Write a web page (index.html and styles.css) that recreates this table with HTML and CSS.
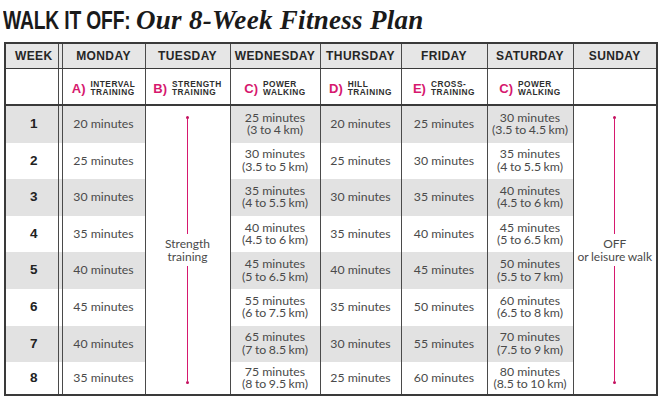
FILE: index.html
```
<!DOCTYPE html>
<html>
<head>
<meta charset="utf-8">
<link rel="stylesheet" href="styles.css">
</head>
<body>
<h1 class="title"><span class="title-sans">WALK IT OFF:</span><span class="title-serif">Our 8-Week Fitness Plan</span></h1>
<table class="plan">
  <colgroup>
    <col class="c-week"><col class="c-mon"><col class="c-tue"><col class="c-wed"><col class="c-thu"><col class="c-fri"><col class="c-sat"><col class="c-sun">
  </colgroup>
  <thead>
    <tr class="days">
      <th class="week">WEEK</th><th>MONDAY</th><th>TUESDAY</th><th>WEDNESDAY</th><th>THURSDAY</th><th>FRIDAY</th><th>SATURDAY</th><th>SUNDAY</th>
    </tr>
    <tr class="types">
      <th class="week"></th>
      <th><span class="type"><span class="letter">A)</span><span class="tname">INTERVAL<br>TRAINING</span></span></th>
      <th><span class="type"><span class="letter">B)</span><span class="tname">STRENGTH<br>TRAINING</span></span></th>
      <th><span class="type"><span class="letter">C)</span><span class="tname">POWER<br>WALKING</span></span></th>
      <th><span class="type"><span class="letter">D)</span><span class="tname">HILL<br>TRAINING</span></span></th>
      <th><span class="type"><span class="letter">E)</span><span class="tname">CROSS-<br>TRAINING</span></span></th>
      <th><span class="type"><span class="letter">C)</span><span class="tname">POWER<br>WALKING</span></span></th>
      <th></th>
    </tr>
  </thead>
  <tbody>
    <tr class="odd">
      <td class="week">1</td><td>20 minutes</td>
      <td class="span" rowspan="8"><div class="bar"><span class="dot"></span><span class="line"></span><span class="bar-text">Strength<br>training</span><span class="line"></span><span class="dot"></span></div></td>
      <td>25 minutes<br><span class="km">(3 to 4 km)</span></td><td>20 minutes</td><td>25 minutes</td><td>30 minutes<br><span class="km">(3.5 to 4.5 km)</span></td>
      <td class="span" rowspan="8"><div class="bar"><span class="dot"></span><span class="line"></span><span class="bar-text">OFF<br>or leisure walk</span><span class="line"></span><span class="dot"></span></div></td>
    </tr>
    <tr class="even">
      <td class="week">2</td><td>25 minutes</td><td>30 minutes<br><span class="km">(3.5 to 5 km)</span></td><td>25 minutes</td><td>30 minutes</td><td>35 minutes<br><span class="km">(4 to 5.5 km)</span></td>
    </tr>
    <tr class="odd">
      <td class="week">3</td><td>30 minutes</td><td>35 minutes<br><span class="km">(4 to 5.5 km)</span></td><td>30 minutes</td><td>35 minutes</td><td>40 minutes<br><span class="km">(4.5 to 6 km)</span></td>
    </tr>
    <tr class="even">
      <td class="week">4</td><td>35 minutes</td><td>40 minutes<br><span class="km">(4.5 to 6 km)</span></td><td>35 minutes</td><td>40 minutes</td><td>45 minutes<br><span class="km">(5 to 6.5 km)</span></td>
    </tr>
    <tr class="odd">
      <td class="week">5</td><td>40 minutes</td><td>45 minutes<br><span class="km">(5 to 6.5 km)</span></td><td>40 minutes</td><td>45 minutes</td><td>50 minutes<br><span class="km">(5.5 to 7 km)</span></td>
    </tr>
    <tr class="even">
      <td class="week">6</td><td>45 minutes</td><td>55 minutes<br><span class="km">(6 to 7.5 km)</span></td><td>35 minutes</td><td>50 minutes</td><td>60 minutes<br><span class="km">(6.5 to 8 km)</span></td>
    </tr>
    <tr class="odd">
      <td class="week">7</td><td>40 minutes</td><td>65 minutes<br><span class="km">(7 to 8.5 km)</span></td><td>30 minutes</td><td>55 minutes</td><td>70 minutes<br><span class="km">(7.5 to 9 km)</span></td>
    </tr>
    <tr class="even last">
      <td class="week">8</td><td>35 minutes</td><td>75 minutes<br><span class="km">(8 to 9.5 km)</span></td><td>25 minutes</td><td>60 minutes</td><td>80 minutes<br><span class="km">(8.5 to 10 km)</span></td>
    </tr>
  </tbody>
</table>
</body>
</html>
```
FILE: styles.css
```
html, body {
  margin: 0;
  padding: 0;
  background: #ffffff;
}

body {
  width: 660px;
  height: 400px;
  overflow: hidden;
  font-family: "Lato", "Open Sans", sans-serif;
  color: #444;
}

.title {
  margin: 0;
  height: 42px;
  padding: 5px 0 0 3px;
  box-sizing: border-box;
  font-size: 25px;
  line-height: 30px;
  color: #1a1a1a;
  white-space: nowrap;
  display: flex;
  align-items: baseline;
}

.title-sans {
  display: inline-block;
  font-family: "Liberation Sans", Arial, sans-serif;
  font-weight: 700;
  font-size: 26px;
  letter-spacing: -0.2px;
  transform: scaleX(0.74);
  transform-origin: left center;
  width: 128px;
}

.title-serif {
  font-family: "Liberation Serif", serif;
  font-weight: 700;
  font-style: italic;
  font-size: 27px;
  letter-spacing: 0.3px;
  margin-left: 5px;
}

.plan {
  margin: 0 0 0 4px;
  width: 652px;
  border-collapse: collapse;
  table-layout: fixed;
  border: 2px solid #3a3a3a;
}

.c-week { width: 57px; }
.c-mon { width: 83px; }
.c-tue { width: 85px; }
.c-wed { width: 90px; }
.c-thu { width: 81px; }
.c-fri { width: 86px; }
.c-sat { width: 86px; }
.c-sun { width: 84px; }

.plan th,
.plan td {
  border-left: 1px solid #4a4a4a;
  border-right: 1px solid #4a4a4a;
  padding: 0;
  text-align: center;
  vertical-align: middle;
}

.days th {
  height: 24px;
  background: #e6e6e6;
  font-family: "Liberation Sans", Arial, sans-serif;
  font-weight: 700;
  font-size: 12px;
  letter-spacing: 0.4px;
  color: #262626;
  border-bottom: 1px solid #3a3a3a;
}

.types th {
  height: 35px;
  background: #ffffff;
  border-bottom: 2px solid #3a3a3a;
}

.type {
  display: inline-flex;
  align-items: center;
  gap: 5px;
  text-align: left;
}

.letter {
  font-family: "Liberation Sans", Arial, sans-serif;
  font-weight: 700;
  font-size: 13px;
  color: #d6186e;
}

.tname {
  font-family: "Liberation Sans", Arial, sans-serif;
  font-weight: 700;
  font-size: 8.3px;
  line-height: 8.5px;
  letter-spacing: 0.5px;
  color: #2e2e2e;
}

.plan tbody td {
  height: 36.6px;
  font-size: 12.3px;
  line-height: 12.5px;
  color: #4a4a4a;
}

.km {
  word-spacing: -0.6px;
}

.plan tbody tr.last td {
  height: 32px;
}

.plan tbody tr.odd td {
  background: #e2e2e2;
}

.plan tbody td.week {
  font-family: "Liberation Sans", Arial, sans-serif;
  font-weight: 700;
  font-size: 13.5px;
  color: #222;
}

.plan .week {
  box-shadow: inset -3px 0 0 #ffffff, inset -4px 0 0 #4a4a4a;
}

.plan tbody tr.odd td.week {
  box-shadow: inset -3px 0 0 #e2e2e2, inset -4px 0 0 #4a4a4a;
}

.days th.week {
  box-shadow: inset -3px 0 0 #e6e6e6, inset -4px 0 0 #4a4a4a;
}

.plan tbody tr.odd td.span,
.plan tbody td.span {
  background: #ffffff;
}

.bar {
  height: 268px;
  display: flex;
  flex-direction: column;
  align-items: center;
}

.dot {
  width: 3px;
  height: 3px;
  border-radius: 50%;
  background: #c4105f;
  flex: none;
}

.line {
  flex: 1;
  width: 1px;
  background: #d6186e;
}

.bar-text {
  padding: 4px 0 3px;
  font-size: 12px;
  line-height: 12.5px;
  word-spacing: -0.5px;
  color: #4a4a4a;
  white-space: nowrap;
}
```
